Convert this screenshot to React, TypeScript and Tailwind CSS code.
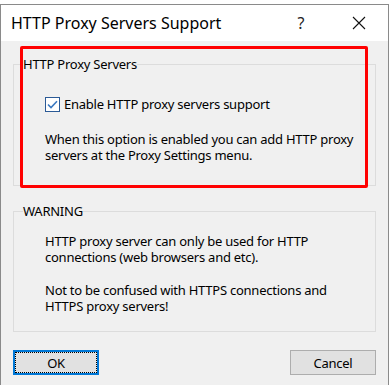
import React from 'react';

const font = { fontFamily: '"Noto Sans", "Open Sans", sans-serif' };

const GroupBox: React.FC<{ title: string; className?: string; children: React.ReactNode }> = ({
  title,
  className = '',
  children,
}) => (
  <fieldset className={`border border-[#dcdcdc] ${className}`}>
    <legend className="ml-[9px] px-0 text-[13px] leading-[16px] tracking-[-0.25px] text-black">{title}</legend>
    {children}
  </fieldset>
);

export default function App() {
  return (
    <div className="relative w-[390px] h-[385px] overflow-hidden bg-white" style={font}>
      {/* Dialog window */}
      <div className="mt-[4px] w-[389px] h-[400px] border border-[#8a8a8a] bg-[#f0f0f0] flex flex-col">
        {/* Title bar */}
        <div className="h-[36px] bg-white flex items-center pl-[10px] pr-[16px]">
          <span className="text-[16px] text-black flex-1">HTTP Proxy Servers Support</span>
          <span className="text-[16px] text-[#222] w-[20px] text-center mr-[41px]">?</span>
          <svg width="14" height="14" viewBox="0 0 14 14" className="mr-[6px]">
            <path d="M1 1 L13 13 M13 1 L1 13" stroke="#111" strokeWidth="1.1" />
          </svg>
        </div>

        {/* Body */}
        <div className="px-[12px] pt-[15px] text-[13px] leading-[16px] tracking-[-0.25px] text-black whitespace-nowrap">
          <GroupBox title="HTTP Proxy Servers" className="h-[130px]">
            <div className="pl-[31px] pt-[24px]">
              <label className="flex items-center gap-[4px]">
                <span className="w-[15px] h-[15px] border border-[#2b5a96] bg-white flex items-center justify-center">
                  <svg width="11" height="9" viewBox="0 0 11 9">
                    <path d="M1 4.5 L4 7.5 L10 1.2" fill="none" stroke="#3a78c0" strokeWidth="1.6" />
                  </svg>
                </span>
                <span>Enable HTTP proxy servers support</span>
              </label>
              <p className="mt-[19px]">
                When this option is enabled you can add HTTP proxy
                <br />
                servers at the Proxy Settings menu.
              </p>
            </div>
          </GroupBox>

          <GroupBox title="WARNING" className="mt-[17px] h-[129px]">
            <div className="pl-[31px] pt-[14px]">
              <p>
                HTTP proxy server can only be used for HTTP
                <br />
                connections (web browsers and etc).
              </p>
              <p className="mt-[17px]">
                Not to be confused with HTTPS connections and
                <br />
                HTTPS proxy servers!
              </p>
            </div>
          </GroupBox>

          {/* Buttons */}
          <div className="mt-[18px] flex justify-between">
            <button className="w-[86px] h-[25px] border-2 border-[#0078d7] bg-[#e1e1e1] p-0 text-[13px]">
              <span className="w-full h-full flex items-center justify-center border border-dotted border-black">
                OK
              </span>
            </button>
            <button className="w-[86px] h-[25px] border border-[#adadad] bg-[#e1e1e1] text-[13px]">
              Cancel
            </button>
          </div>
        </div>
      </div>

      {/* Red annotation rectangle */}
      <div className="absolute left-[20px] top-[46px] w-[348px] h-[142px] border-[3px] border-[#ff0000] rounded-[2px] pointer-events-none" />
    </div>
  );
}
